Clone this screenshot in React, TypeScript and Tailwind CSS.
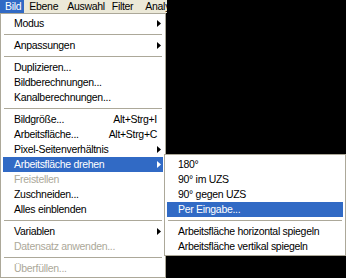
import React from 'react';

type Item =
  | { sep: true }
  | { label: string; sub?: boolean; shortcut?: string; disabled?: boolean; active?: boolean };

const mainItems: Item[] = [
  { label: 'Modus', sub: true },
  { sep: true },
  { label: 'Anpassungen', sub: true },
  { sep: true },
  { label: 'Duplizieren...' },
  { label: 'Bildberechnungen...' },
  { label: 'Kanalberechnungen...' },
  { sep: true },
  { label: 'Bildgröße...', shortcut: 'Alt+Strg+I' },
  { label: 'Arbeitsfläche...', shortcut: 'Alt+Strg+C' },
  { label: 'Pixel-Seitenverhältnis', sub: true },
  { label: 'Arbeitsfläche drehen', sub: true, active: true },
  { label: 'Freistellen', disabled: true },
  { label: 'Zuschneiden...' },
  { label: 'Alles einblenden' },
  { sep: true },
  { label: 'Variablen', sub: true },
  { label: 'Datensatz anwenden...', disabled: true },
  { sep: true },
  { label: 'Überfüllen...', disabled: true },
];

const subItems: Item[] = [
  { label: '180°' },
  { label: '90° im UZS' },
  { label: '90° gegen UZS' },
  { label: 'Per Eingabe...', active: true },
  { sep: true },
  { label: 'Arbeitsfläche horizontal spiegeln' },
  { label: 'Arbeitsfläche vertikal spiegeln' },
];

function Arrow({ white }: { white?: boolean }) {
  return (
    <svg width="4" height="7" viewBox="0 0 4 7" className="shrink-0">
      <path d="M0 0L4 3.5L0 7Z" fill={white ? '#ffffff' : '#000000'} />
    </svg>
  );
}

function MenuList({ items }: { items: Item[] }) {
  return (
    <div className="flex flex-col">
      {items.map((it, i) => {
        if ('sep' in it) {
          return (
            <div key={i} className="h-[7px] flex items-center px-[1px]">
              <div className="h-[1px] w-full bg-[#aca899]" />
            </div>
          );
        }
        const color = it.active ? 'text-white bg-[#316ac5]' : it.disabled ? 'text-[#aca899]' : 'text-black';
        return (
          <div key={i} className={`h-[15px] flex items-center pl-[11px] pr-[2px] ${color}`}>
            <span className="flex-1 whitespace-nowrap">{it.label}</span>
            {it.shortcut && <span className="whitespace-nowrap mr-[4px]">{it.shortcut}</span>}
            {it.sub && <Arrow white={it.active} />}
          </div>
        );
      })}
    </div>
  );
}

export default function App() {
  return (
    <div
      className="relative w-[346px] h-[278px] bg-black overflow-hidden text-[10.5px] tracking-[-0.3px] leading-none"
      style={{ fontFamily: '"Liberation Sans", Arial, sans-serif' }}
    >
      <div className="flex h-[13px] w-[167px] bg-[#ece9d8] overflow-hidden">
        <div className="pl-[5px] pr-[3px] flex items-center bg-[#316ac5] text-white">Bild</div>
        <div className="pl-[5px] pr-[4px] flex items-center text-black whitespace-nowrap">Ebene</div>
        <div className="pl-[5px] pr-[3px] flex items-center text-black whitespace-nowrap">Auswahl</div>
        <div className="pl-[4px] pr-[6px] flex items-center text-black whitespace-nowrap">Filter</div>
        <div className="pl-[6px] flex items-center text-black whitespace-nowrap">Analyse</div>
      </div>
      <div className="w-[166px] h-[265px] bg-white border border-[#aca899] px-[2px] pt-[2px]">
        <MenuList items={mainItems} />
      </div>
      <div className="absolute left-[164px] top-[154px] w-[182px] bg-white border border-[#aca899] p-[2px] pb-[1px]">
        <MenuList items={subItems} />
      </div>
    </div>
  );
}
